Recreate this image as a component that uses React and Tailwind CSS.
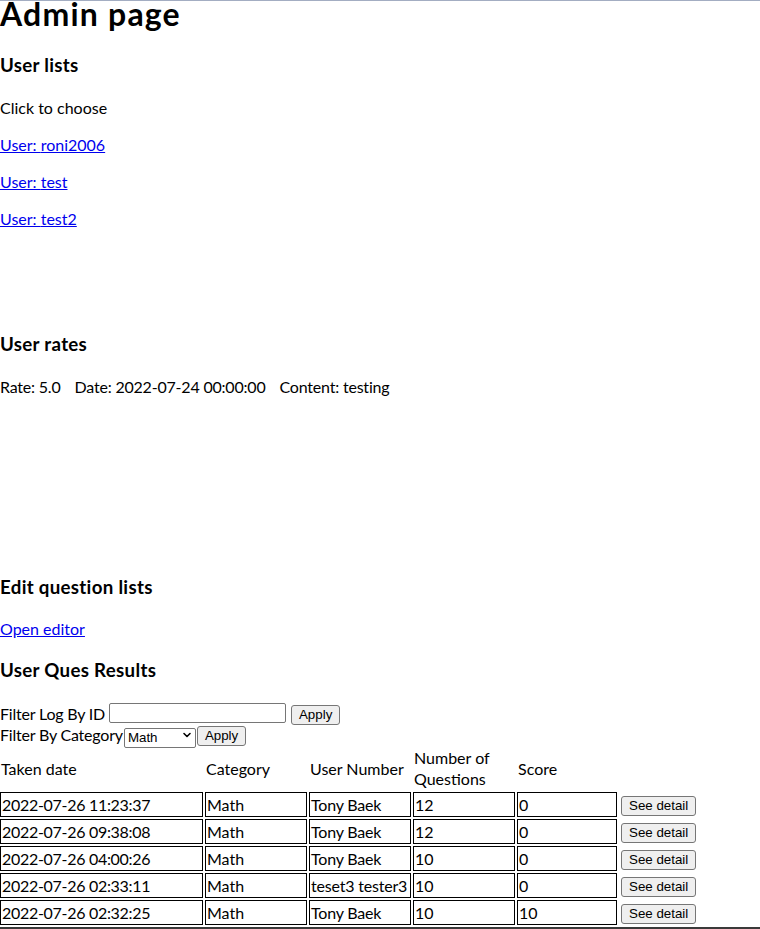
import { ChevronDown } from 'lucide-react';

const rows = [
  { date: '2022-07-26 11:23:37', cat: 'Math', user: 'Tony Baek', num: 12, score: 0 },
  { date: '2022-07-26 09:38:08', cat: 'Math', user: 'Tony Baek', num: 12, score: 0 },
  { date: '2022-07-26 04:00:26', cat: 'Math', user: 'Tony Baek', num: 10, score: 0 },
  { date: '2022-07-26 02:33:11', cat: 'Math', user: 'teset3 tester3', num: 10, score: 0 },
  { date: '2022-07-26 02:32:25', cat: 'Math', user: 'Tony Baek', num: 10, score: 10 },
];

const users = ['roni2006', 'test', 'test2'];

function Btn({ children }) {
  return (
    <button className="font-['Liberation_Sans',Arial,sans-serif] text-[13.33px] leading-[16px] bg-[#efefef] border border-[#767676] rounded-[3px] px-[7px] py-[1px] text-black">
      {children}
    </button>
  );
}

const h3 = "text-[18.72px] font-bold leading-[25px] tracking-[0.3px]";

export default function App() {
  return (
    <div className="min-h-[929px] bg-white text-black border-t border-[#a3adc2] font-['Segoe_UI',Lato,sans-serif] text-[16px] leading-[21px]">
      <h1 className="text-[32px] font-bold leading-[42px] tracking-[1.2px] -mt-[8px]">Admin page</h1>

      <h3 className={`${h3} mt-[18px]`}>User lists</h3>
      <p className="mt-[19px]">Click to choose</p>
      {users.map(u => (
        <p key={u} className="mt-[16px]">
          <a href="#" className="text-[#0000ee] underline">User: {u}</a>
        </p>
      ))}

      <h3 className={`${h3} mt-[103px]`}>User rates</h3>
      <p className="mt-[19px] tracking-[-0.2px]">
        <span className="mr-[14px]">Rate: 5.0</span>
        <span className="mr-[14px]">Date: 2022-07-24 00:00:00</span>
        <span>Content: testing</span>
      </p>

      <h3 className={`${h3} mt-[178px]`}>Edit question lists</h3>
      <p className="mt-[18px]">
        <a href="#" className="text-[#0000ee] underline">Open editor</a>
      </p>

      <h3 className={`${h3} mt-[19px]`}>User Ques Results</h3>

      <div className="mt-[19px] flex items-center h-[22px]">
        <span className="tracking-[-0.2px]">Filter Log By ID</span>
        <input className="ml-[4px] w-[177px] h-[20px] border border-[#767676] rounded-[2px] bg-white" />
        <span className="ml-[5px]"><Btn>Apply</Btn></span>
      </div>
      <div className="flex items-center h-[21px]">
        <span className="tracking-[-0.2px]">Filter By Category</span>
        <span className="relative ml-[1px] w-[72px] h-[20px]">
          <select defaultValue="Math" className="appearance-none w-full h-full border border-[#767676] rounded-[2px] bg-white pl-[3px] font-['Liberation_Sans',Arial,sans-serif] text-[13.33px] leading-[16px]">
            <option>Math</option>
            <option>Science</option>
            <option>English</option>
          </select>
          <ChevronDown className="absolute right-[3px] top-[4px] w-[12px] h-[12px] pointer-events-none" strokeWidth={3.2} />
        </span>
        <span className="ml-[1px]"><Btn>Apply</Btn></span>
      </div>

      <table className="border-separate border-spacing-[2px] -ml-[2px] mt-[-1px]">
        <thead>
          <tr>
            <th className="font-normal text-left p-[1px] w-[203px]">Taken date</th>
            <th className="font-normal text-left p-[1px] w-[102px]">Category</th>
            <th className="font-normal text-left p-[1px] w-[102px]">User Number</th>
            <th className="font-normal text-left p-[1px] w-[102px]">Number of Questions</th>
            <th className="font-normal text-left p-[1px] w-[100px]">Score</th>
            <th className="p-[1px]"></th>
          </tr>
        </thead>
        <tbody>
          {rows.map((r, i) => (
            <tr key={i}>
              <td className="border border-black p-[1px] whitespace-nowrap tracking-[-0.3px]">{r.date}</td>
              <td className="border border-black p-[1px]">{r.cat}</td>
              <td className="border border-black p-[1px] whitespace-nowrap tracking-[-0.2px]">{r.user}</td>
              <td className="border border-black p-[1px]">{r.num}</td>
              <td className="border border-black p-[1px]">{r.score}</td>
              <td className="p-[1px] pl-[2px]"><Btn>See detail</Btn></td>
            </tr>
          ))}
        </tbody>
      </table>
      <div className="h-[2px] bg-[#3a3a3a]"></div>
    </div>
  );
}
